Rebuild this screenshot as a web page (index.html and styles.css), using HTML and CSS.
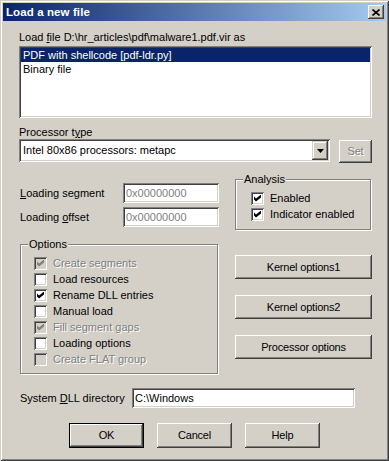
FILE: index.html
```html
<!DOCTYPE html>
<html>
<head>
<meta charset="utf-8">
<link rel="stylesheet" href="styles.css">
</head>
<body>
<div class="window">
  <div class="titlebar">
    <span class="title">Load a new file</span>
    <span class="close"><svg width="8" height="7" viewBox="0 0 8 7"><path d="M0.5 0.5 L7.5 6.5 M7.5 0.5 L0.5 6.5" stroke="#000" stroke-width="1.6" fill="none"/></svg></span>
  </div>
  <div class="body">
    <div class="label">Load <u>f</u>ile D:\hr_articles\pdf\malware1.pdf.vir as</div>
    <div class="listbox">
      <div class="item sel">PDF with shellcode [pdf-ldr.py]</div>
      <div class="item">Binary file</div>
    </div>
    <div class="label pt">Processor t<u>y</u>pe</div>
    <div class="combo-row">
      <div class="combo">
        <span class="combo-text">Intel 80x86 processors: metapc</span>
        <span class="drop"><svg width="7" height="4" viewBox="0 0 7 4"><path d="M0 0H7L3.5 4Z" fill="#000"/></svg></span>
      </div>
      <div class="btn set disabled">Set</div>
    </div>
    <div class="mid">
      <div class="fields">
        <div class="field"><span class="flabel"><u>L</u>oading segment</span><div class="input gray">0x00000000</div></div>
        <div class="field"><span class="flabel">Loading <u>o</u>ffset</span><div class="input gray">0x00000000</div></div>
      </div>
      <div class="group analysis">
        <div class="legend">Analysis</div>
        <div class="rows">
          <div class="chk"><span class="box on"></span><span>Enabled</span></div>
          <div class="chk"><span class="box on"></span><span>Indicator enabled</span></div>
        </div>
      </div>
    </div>
    <div class="lower">
      <div class="group options">
        <div class="legend">Options</div>
        <div class="rows">
          <div class="chk dis"><span class="box on"></span><span>Create segments</span></div>
          <div class="chk"><span class="box"></span><span>Load resources</span></div>
          <div class="chk"><span class="box on"></span><span>Rename DLL entries</span></div>
          <div class="chk"><span class="box"></span><span>Manual load</span></div>
          <div class="chk dis"><span class="box on"></span><span>Fill segment gaps</span></div>
          <div class="chk"><span class="box"></span><span>Loading options</span></div>
          <div class="chk dis"><span class="box"></span><span>Create FLAT group</span></div>
        </div>
      </div>
      <div class="side">
        <div class="btn wide">Kernel options1</div>
        <div class="btn wide">Kernel options2</div>
        <div class="btn wide">Processor options</div>
      </div>
    </div>
    <div class="dll-row">
      <span class="dlabel">System <u>D</u>LL directory</span>
      <div class="input dll">C:\Windows</div>
    </div>
    <div class="actions">
      <div class="btn act default"><span>OK</span></div>
      <div class="btn act">Cancel</div>
      <div class="btn act">Help</div>
    </div>
  </div>
</div>
</body>
</html>
```
FILE: styles.css
```css
* { box-sizing: border-box; margin: 0; padding: 0; }
html, body { width: 389px; height: 461px; overflow: hidden; background: #d4d0c8; }
body {
  font-family: "Liberation Sans", Arial, sans-serif;
  font-size: 11px;
  line-height: 13px;
  color: #000;
  letter-spacing: 0;
}
u { text-decoration: underline; text-underline-offset: 1px; }

.window {
  width: 389px;
  height: 461px;
  background: #d4d0c8;
  padding: 3px;
  box-shadow: inset 1px 1px #d4d0c8, inset -1px -1px #404040, inset 2px 2px #fff, inset -2px -2px #808080;
}
.titlebar {
  height: 18px;
  display: flex;
  align-items: center;
  padding: 0 2px;
  background: linear-gradient(to right, #0a246a, #a6caf0);
}
.title {
  color: #fff;
  font-weight: bold;
  font-size: 11.5px;
  letter-spacing: 0.1px;
  margin-left: 1px;
}
.close {
  margin-left: auto;
  width: 16px;
  height: 14px;
  display: flex;
  align-items: center;
  justify-content: center;
  background: #d4d0c8;
  box-shadow: inset -1px -1px #404040, inset 1px 1px #fff, inset -2px -2px #808080;
}

.body { padding: 10px 14px 0 16px; }

.listbox, .combo, .input {
  background: #fff;
  box-shadow: inset 1px 1px #808080, inset -1px -1px #fff, inset 2px 2px #404040, inset -2px -2px #d4d0c8;
}
.listbox {
  margin-top: 2px;
  height: 72px;
  padding: 2px;
}
.item { height: 14px; line-height: 14px; padding-left: 2px; }
.item.sel { background: #0a246a; color: #fff; }

.pt { margin-top: 8px; }

.combo-row { display: flex; gap: 9px; }
.combo {
  width: 311px;
  height: 23px;
  padding: 2px;
  display: flex;
  align-items: center;
}
.combo-text { padding-left: 2px; flex: 1; }
.drop {
  width: 16px;
  height: 19px;
  display: flex;
  align-items: center;
  justify-content: center;
  background: #d4d0c8;
  box-shadow: inset -1px -1px #404040, inset 1px 1px #d4d0c8, inset -2px -2px #808080, inset 2px 2px #fff;
}

.btn {
  background: #d4d0c8;
  box-shadow: inset -1px -1px #404040, inset 1px 1px #fff, inset -2px -2px #808080;
  display: flex;
  align-items: center;
  justify-content: center;
  letter-spacing: -0.2px;
}
.btn.disabled { color: #808080; text-shadow: 1px 1px 0 #fff; }
.set { width: 33px; height: 23px; margin-top: 1px; }

.mid { display: flex; margin-top: 16px; }
.fields {
  width: 200px;
  margin-top: 4px;
  display: flex;
  flex-direction: column;
  gap: 4px;
}
.field { display: flex; align-items: center; }
.flabel { width: 104px; padding-left: 1px; }
.input {
  width: 96px;
  height: 20px;
  padding: 0 3px;
  display: flex;
  align-items: center;
}
.input.gray { color: #808080; }

.group {
  border: 1px solid #808080;
  box-shadow: 1px 1px 0 #fff, inset 1px 1px 0 #fff;
}
.legend {
  display: block;
  width: fit-content;
  height: 13px;
  background: #d4d0c8;
  margin-left: 7px;
  padding: 0 1px;
  margin-top: -7px;
}
.analysis {
  width: 136px;
  height: 51px;
  margin-left: 16px;
}
.analysis .rows { margin-top: 4px; padding-left: 15px; }

.chk { height: 16px; display: flex; align-items: center; gap: 5px; }
.box {
  width: 13px;
  height: 13px;
  flex: none;
  background: #fff;
  box-shadow: inset 1px 1px #808080, inset -1px -1px #fff, inset 2px 2px #404040, inset -2px -2px #d4d0c8;
  position: relative;
}
.box.on::after {
  content: "";
  position: absolute;
  left: 3px;
  top: 3px;
  width: 7px;
  height: 7px;
  background: #000;
  clip-path: polygon(0 28.6%, 28.6% 57.1%, 100% 0, 100% 42.9%, 28.6% 100%, 0 71.4%);
}
.chk.dis { color: #808080; text-shadow: 1px 1px 0 #fff; }
.chk.dis .box { background: #d4d0c8; }
.chk.dis .box.on::after { background: #808080; }

.lower { display: flex; margin-top: 14px; }
.options {
  width: 198px;
  height: 130px;
  margin-left: 1px;
}
.options .rows { margin-top: 4px; padding-left: 13px; }
.chk .box + span { margin-left: 1px; }

.side {
  margin-left: auto;
  margin-top: 11px;
  display: flex;
  flex-direction: column;
  gap: 16px;
}
.wide { width: 137px; height: 24px; }

.dll-row { display: flex; align-items: center; margin-top: 14px; }
.dlabel { width: 113px; padding-left: 1px; }
.input.dll { width: 223px; height: 20px; }

.actions {
  display: flex;
  justify-content: center;
  gap: 13px;
  margin-top: 15px;
  margin-right: 2px;
}
.act { width: 75px; height: 25px; }
.act.default {
  box-shadow: inset 0 0 0 1px #000, inset -2px -2px #404040, inset 2px 2px #fff, inset -3px -3px #808080;
}
```
